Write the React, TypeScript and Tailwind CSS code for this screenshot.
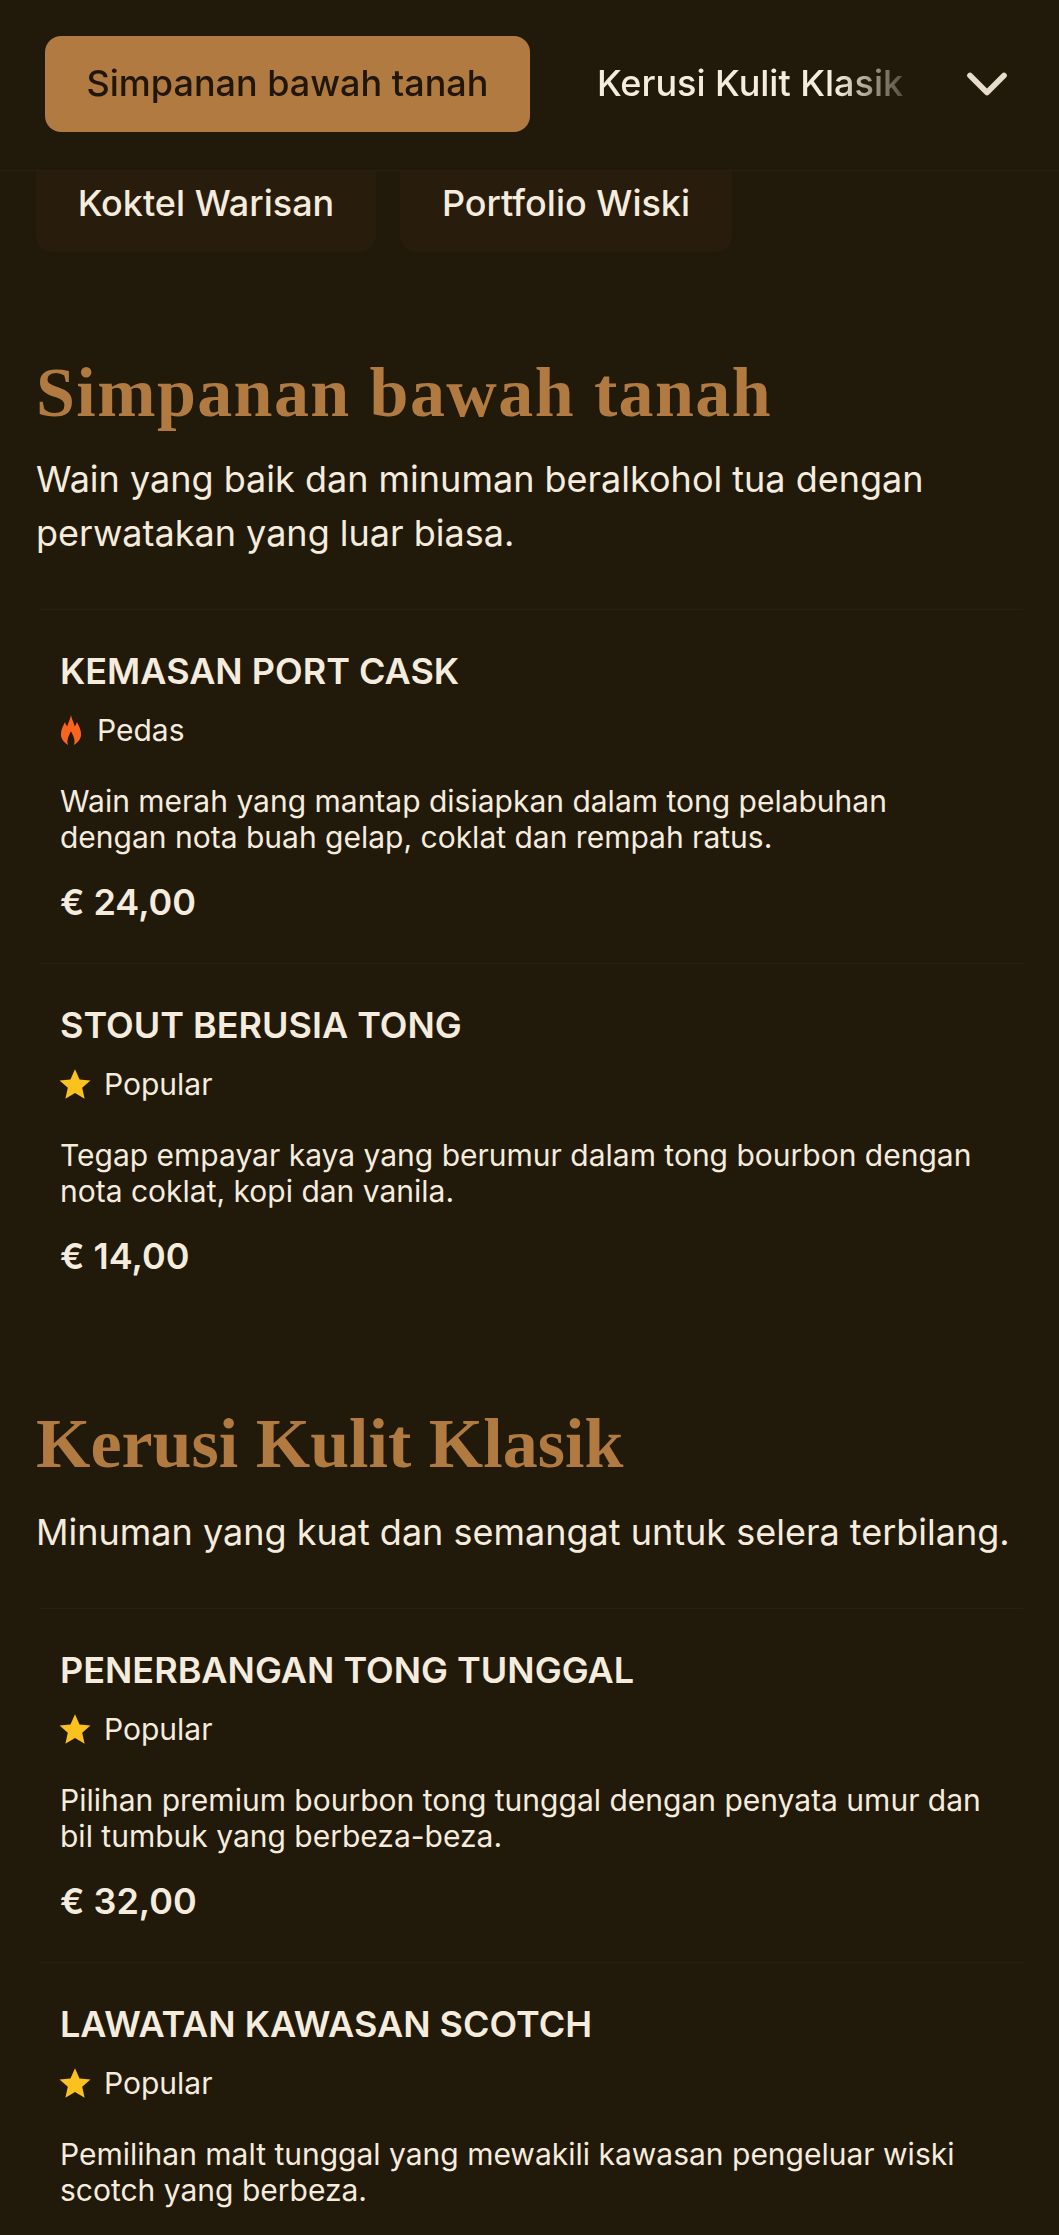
import { ChevronDown } from 'lucide-react'

interface Item {
  name: string
  tag: 'spicy' | 'popular'
  lines: string[]
  price: string
}

const cellar: Item[] = [
  {
    name: 'KEMASAN PORT CASK',
    tag: 'spicy',
    lines: ['Wain merah yang mantap disiapkan dalam tong pelabuhan', 'dengan nota buah gelap, coklat dan rempah ratus.'],
    price: '€ 24,00',
  },
  {
    name: 'STOUT BERUSIA TONG',
    tag: 'popular',
    lines: ['Tegap empayar kaya yang berumur dalam tong bourbon dengan', 'nota coklat, kopi dan vanila.'],
    price: '€ 14,00',
  },
]

const leather: Item[] = [
  {
    name: 'PENERBANGAN TONG TUNGGAL',
    tag: 'popular',
    lines: ['Pilihan premium bourbon tong tunggal dengan penyata umur dan', 'bil tumbuk yang berbeza-beza.'],
    price: '€ 32,00',
  },
  {
    name: 'LAWATAN KAWASAN SCOTCH',
    tag: 'popular',
    lines: ['Pemilihan malt tunggal yang mewakili kawasan pengeluar wiski', 'scotch yang berbeza.'],
    price: '',
  },
]

function Tag({ tag }: { tag: Item['tag'] }) {
  if (tag === 'spicy') {
    return (
      <div className="flex h-[36px] items-center gap-[15px] text-[30px]">
        <svg viewBox="0 0 24 24" preserveAspectRatio="none" className="h-[30px] w-[22px] text-[#f9641e]">
          <path
            d="M12 0C13 4 15 6 16 9C17 8 18 7 18.5 5.5C21 9 23 12 23 15.5C23 19 19 22.5 15 24C16.5 22 16.5 19 12 13C7.5 19 7.5 22 9 24C5 22.5 1 19 1 15.5C1 12 3 9 5.5 5.5C6 7 7 8 8 9C9 6 11 4 12 0Z"
            fill="currentColor"
          />
        </svg>
        <span>Pedas</span>
      </div>
    )
  }
  return (
    <div className="flex h-[36px] items-center gap-[13px] text-[30px]">
      <svg viewBox="0 0 24 24" className="-ml-px size-[32px] text-[#fbc11f]">
        <path d="M12 1l3.4 7.6 8.2.8-6.2 5.5 1.8 8.1L12 18.8 4.8 23l1.8-8.1L.4 9.4l8.2-.8z" fill="currentColor" />
      </svg>
      <span>Popular</span>
    </div>
  )
}

function MenuItem({ item }: { item: Item }) {
  return (
    <div className="ml-[3px] h-[354px] border-t border-[#2a2011] pt-[41px] pl-[21px]">
      <h3 className="text-[36px] leading-[40px] font-semibold">{item.name}</h3>
      <div className="mt-[21px]">
        <Tag tag={item.tag} />
      </div>
      <p className="mt-[35px] text-[30px] leading-[36px]">
        {item.lines.map((line) => (
          <span key={line} className="block whitespace-nowrap">
            {line}
          </span>
        ))}
      </p>
      {item.price && <p className="mt-[25px] text-[36px] leading-[44px] font-semibold">{item.price}</p>}
    </div>
  )
}

export default function App() {
  return (
    <div className="h-[2235px] overflow-hidden bg-[#21190a] font-['Inter',sans-serif] text-[#f6ecdd]">
      <header className="flex h-[171px] items-start border-b border-[#2a2011] pt-[36px] pl-[45px]">
        <div className="flex h-[96px] w-[880px] items-center gap-[24px] overflow-hidden [mask-image:linear-gradient(to_right,black_90%,transparent)]">
          <button className="flex h-[96px] w-[485px] shrink-0 items-center justify-center rounded-[16px] bg-[#b07a40] pb-[2px] text-[36px] font-medium text-[#20160a]">
            Simpanan bawah tanah
          </button>
          <span className="px-[43px] pb-[2px] text-[36px] font-medium whitespace-nowrap">Kerusi Kulit Klasik</span>
        </div>
        <ChevronDown className="mt-[14px] ml-[28px] size-[68px] shrink-0 text-[#e8dccb]" strokeWidth={2} />
      </header>

      <div className="flex gap-[24px] px-[36px]">
        <span className="flex h-[81px] w-[340px] items-start justify-center rounded-b-[16px] bg-[#281c0d] pt-[5px] text-[36px] font-medium">
          Koktel Warisan
        </span>
        <span className="flex h-[81px] w-[332px] items-start justify-center rounded-b-[16px] bg-[#281c0d] pt-[5px] text-[36px] font-medium">
          Portfolio Wiski
        </span>
      </div>

      <section className="mt-[101px] px-[36px]">
        <h2 className="font-['Liberation_Serif',serif] text-[70px] leading-[80px] font-bold tracking-[1.4px] text-[#b07a40]">
          Simpanan bawah tanah
        </h2>
        <p className="mt-[19px] text-[36px] leading-[54px]">
          Wain yang baik dan minuman beralkohol tua dengan
          <br />
          perwatakan yang luar biasa.
        </p>
        <div className="mt-[49px]">
          {cellar.map((item) => (
            <MenuItem key={item.name} item={item} />
          ))}
        </div>
      </section>

      <section className="mt-[87px] px-[36px]">
        <h2 className="font-['Liberation_Serif',serif] text-[70px] leading-[80px] font-bold text-[#b07a40]">
          Kerusi Kulit Klasik
        </h2>
        <p className="mt-[21px] text-[36px] leading-[54px] whitespace-nowrap">
          Minuman yang kuat dan semangat untuk selera terbilang.
        </p>
        <div className="mt-[49px]">
          {leather.map((item) => (
            <MenuItem key={item.name} item={item} />
          ))}
        </div>
      </section>
    </div>
  )
}
